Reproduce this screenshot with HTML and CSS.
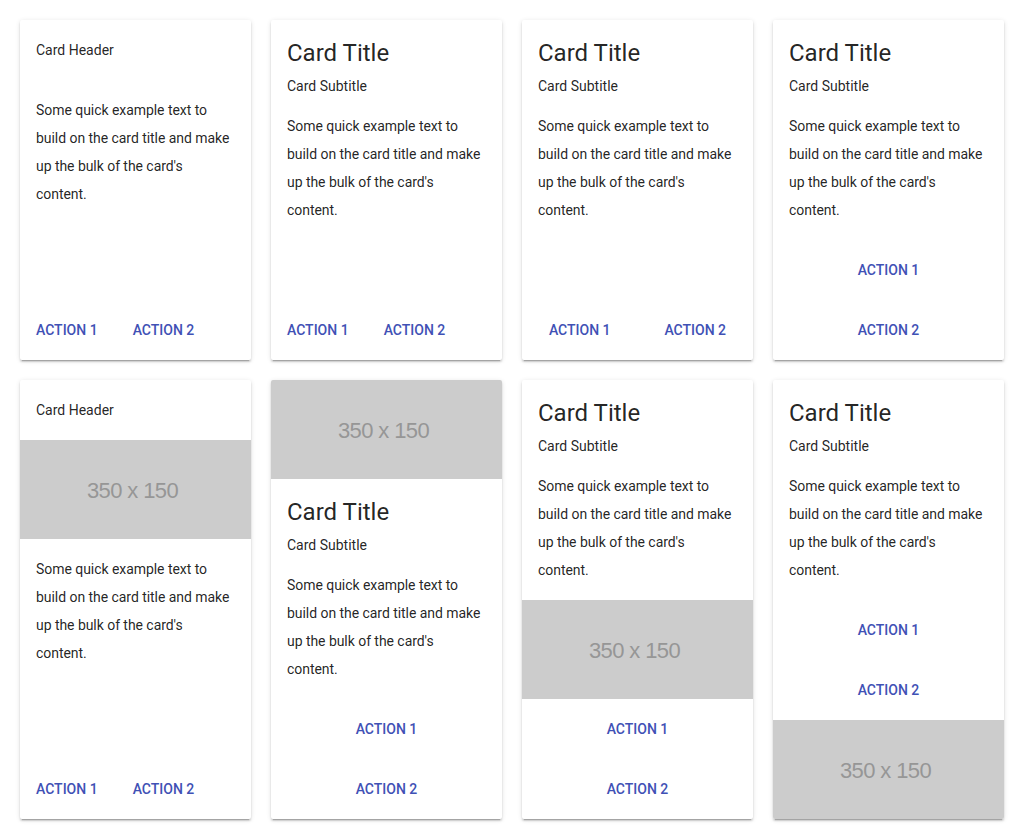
FILE: index.html
```html
<!DOCTYPE html>
<html>
<head>
<meta charset="utf-8">
<link rel="stylesheet" href="styles.css">
</head>
<body>
<div class="grid">
  <div class="card">
    <div class="header">Card Header</div>
    <div class="body">Some quick example text to build on the card title and make up the bulk of the card's content.</div>
    <div class="actions row"><span class="btn">Action 1</span><span class="btn">Action 2</span></div>
  </div>
  <div class="card">
    <div class="titles"><div class="title">Card Title</div><div class="subtitle">Card Subtitle</div></div>
    <div class="body">Some quick example text to build on the card title and make up the bulk of the card's content.</div>
    <div class="actions row"><span class="btn">Action 1</span><span class="btn">Action 2</span></div>
  </div>
  <div class="card">
    <div class="titles"><div class="title">Card Title</div><div class="subtitle">Card Subtitle</div></div>
    <div class="body">Some quick example text to build on the card title and make up the bulk of the card's content.</div>
    <div class="actions spread"><span class="btn">Action 1</span><span class="btn">Action 2</span></div>
  </div>
  <div class="card">
    <div class="titles"><div class="title">Card Title</div><div class="subtitle">Card Subtitle</div></div>
    <div class="body">Some quick example text to build on the card title and make up the bulk of the card's content.</div>
    <div class="actions stack"><span class="btn">Action 1</span><span class="btn">Action 2</span></div>
  </div>

  <div class="card">
    <div class="header">Card Header</div>
    <div class="img">350 x 150</div>
    <div class="body">Some quick example text to build on the card title and make up the bulk of the card's content.</div>
    <div class="actions row"><span class="btn">Action 1</span><span class="btn">Action 2</span></div>
  </div>
  <div class="card">
    <div class="img">350 x 150</div>
    <div class="titles"><div class="title">Card Title</div><div class="subtitle">Card Subtitle</div></div>
    <div class="body">Some quick example text to build on the card title and make up the bulk of the card's content.</div>
    <div class="actions stack"><span class="btn">Action 1</span><span class="btn">Action 2</span></div>
  </div>
  <div class="card">
    <div class="titles"><div class="title">Card Title</div><div class="subtitle">Card Subtitle</div></div>
    <div class="body">Some quick example text to build on the card title and make up the bulk of the card's content.</div>
    <div class="img">350 x 150</div>
    <div class="actions stack"><span class="btn">Action 1</span><span class="btn">Action 2</span></div>
  </div>
  <div class="card">
    <div class="titles"><div class="title">Card Title</div><div class="subtitle">Card Subtitle</div></div>
    <div class="body">Some quick example text to build on the card title and make up the bulk of the card's content.</div>
    <div class="actions stack flat"><span class="btn">Action 1</span><span class="btn">Action 2</span></div>
    <div class="img">350 x 150</div>
  </div>
</div>
</body>
</html>
```
FILE: styles.css
```css
html, body {
  margin: 0;
  padding: 0;
  background: #fff;
}
body {
  font-family: Roboto, "Noto Sans", sans-serif;
  color: rgba(0, 0, 0, 0.87);
  font-size: 14px;
}
.grid {
  display: grid;
  grid-template-columns: repeat(4, 1fr);
  gap: 20px;
  padding: 20px;
}
.card {
  display: flex;
  flex-direction: column;
  background: #fff;
  border-radius: 2px;
  overflow: hidden;
  box-shadow: 0 2px 2px 0 rgba(0,0,0,.14), 0 3px 1px -2px rgba(0,0,0,.2), 0 1px 5px 0 rgba(0,0,0,.12);
}
.header {
  padding: 16px;
  line-height: 28px;
}
.titles {
  padding: 16px 16px 0;
}
.title {
  font-size: 24px;
  line-height: 34px;
}
.subtitle {
  margin-top: 6px;
  line-height: 20px;
}
.body {
  padding: 16px;
  line-height: 28px;
  letter-spacing: -0.05px;
}
.img {
  box-sizing: border-box;
  height: 99px;
  padding: 3px 6px 0 0;
  background: #ccc;
  color: #969696;
  font-family: "Liberation Sans", Arial, sans-serif;
  font-size: 22px;
  letter-spacing: -0.6px;
  display: flex;
  align-items: center;
  justify-content: center;
}
.actions {
  margin-top: auto;
  display: flex;
}
.actions.flat {
  margin-top: 0;
}
.btn {
  color: #3f51b5;
  font-weight: 500;
  text-transform: uppercase;
  line-height: 28px;
  padding: 16px;
}
.row {
  gap: 3px;
}
.spread .btn {
  flex: 1;
  text-align: center;
}
.stack {
  flex-direction: column;
}
.stack .btn {
  text-align: center;
}
```
